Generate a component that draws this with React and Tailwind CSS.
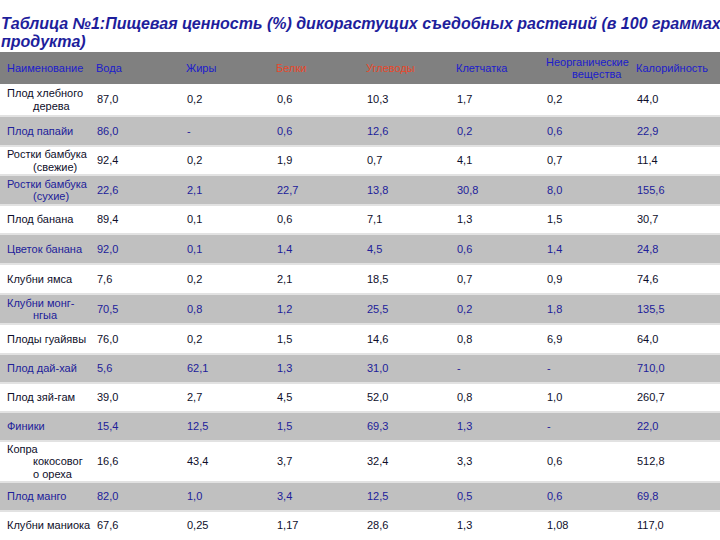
const head = [
  "Наименование",
  "Вода",
  "Жиры",
  "Белки",
  "Углеводы",
  "Клетчатка",
  ["Неорганические", "вещества"],
  "Калорийность",
];

const rows = [
  { name: ["Плод хлебного", "дерева"], v: ["87,0", "0,2", "0,6", "10,3", "1,7", "0,2", "44,0"], h: "h-[31px]" },
  { name: ["Плод папайи"], v: ["86,0", "-", "0,6", "12,6", "0,2", "0,6", "22,9"], h: "h-[30px]" },
  { name: ["Ростки бамбука", "(свежие)"], v: ["92,4", "0,2", "1,9", "0,7", "4,1", "0,7", "11,4"], h: "h-[29px]" },
  { name: ["Ростки бамбука", "(сухие)"], v: ["22,6", "2,1", "22,7", "13,8", "30,8", "8,0", "155,6"], h: "h-[30px]" },
  { name: ["Плод банана"], v: ["89,4", "0,1", "0,6", "7,1", "1,3", "1,5", "30,7"], h: "h-[29px]" },
  { name: ["Цветок банана"], v: ["92,0", "0,1", "1,4", "4,5", "0,6", "1,4", "24,8"], h: "h-[30px]" },
  { name: ["Клубни ямса"], v: ["7,6", "0,2", "2,1", "18,5", "0,7", "0,9", "74,6"], h: "h-[30px]" },
  { name: ["Клубни монг-", "нгыа"], v: ["70,5", "0,8", "1,2", "25,5", "0,2", "1,8", "135,5"], h: "h-[30px]" },
  { name: ["Плоды гуайявы"], v: ["76,0", "0,2", "1,5", "14,6", "0,8", "6,9", "64,0"], h: "h-[30px]" },
  { name: ["Плод дай-хай"], v: ["5,6", "62,1", "1,3", "31,0", "-", "-", "710,0"], h: "h-[29px]" },
  { name: ["Плод зяй-гам"], v: ["39,0", "2,7", "4,5", "52,0", "0,8", "1,0", "260,7"], h: "h-[29px]" },
  { name: ["Финики"], v: ["15,4", "12,5", "1,5", "69,3", "1,3", "-", "22,0"], h: "h-[29px]" },
  { name: ["Копра", "кокосовог", "о ореха"], v: ["16,6", "43,4", "3,7", "32,4", "3,3", "0,6", "512,8"], h: "h-[41px]" },
  { name: ["Плод манго"], v: ["82,0", "1,0", "3,4", "12,5", "0,5", "0,6", "69,8"], h: "h-[29px]" },
  { name: ["Клубни маниока"], v: ["67,6", "0,25", "1,17", "28,6", "1,3", "1,08", "117,0"], h: "h-[29px]" },
];

const Lines = ({ lines }) => (
  <div className="pl-[33px] -indent-[26px] whitespace-nowrap leading-[12.5px]">
    {lines.map((l, i) => (
      <span key={i}>
        {i > 0 && <br />}
        {l}
      </span>
    ))}
  </div>
);

export default function App() {
  return (
    <div className="w-[720px] h-[540px] overflow-hidden bg-white font-['Liberation_Sans',Arial,sans-serif]">
      {/* Title */}
      <h1 className="pt-[15px] h-[52px] whitespace-nowrap text-[16px] leading-[18px] font-bold italic text-[#1e1e9c]">
        <div className="pl-[1px]">Таблица №1:Пищевая ценность (%) дикорастущих съедобных растений (в 100 граммах</div>
        <div className="pl-[1px]">продукта)</div>
      </h1>

      {/* Header */}
      <div className="grid grid-cols-[repeat(8,90px)] h-[32px] bg-[#808080] text-[11px] text-[#1c1ccc]">
        {head.map((h, i) => (
          <div
            key={i}
            className={`flex items-center ${i === 3 || i === 4 ? "text-[#e8482a]" : ""} ${i === 0 ? "pl-[7px]" : "pl-[6px]"}`}
          >
            {Array.isArray(h) ? (
              <div className="pl-[26px] -indent-[26px] leading-[12px] whitespace-nowrap">
                {h[0]}
                <br />
                {h[1]}
              </div>
            ) : (
              h
            )}
          </div>
        ))}
      </div>

      {/* Rows */}
      {rows.map((r, ri) => {
        const gray = ri % 2 === 1;
        return (
          <div
            key={ri}
            className={`grid grid-cols-[repeat(8,90px)] text-[11px] ${r.h} ${ri > 0 ? "border-t-2 border-[#e2e2e2]" : ""} ${
              gray ? "bg-[#c0c0c0] text-[#20209a]" : "bg-white text-[#0e0e2a]"
            }`}
          >
            <div className="flex items-center">
              <Lines lines={r.name} />
            </div>
            {r.v.map((v, i) => (
              <div key={i} className="flex items-center pl-[7px]">
                {v}
              </div>
            ))}
          </div>
        );
      })}
    </div>
  );
}
